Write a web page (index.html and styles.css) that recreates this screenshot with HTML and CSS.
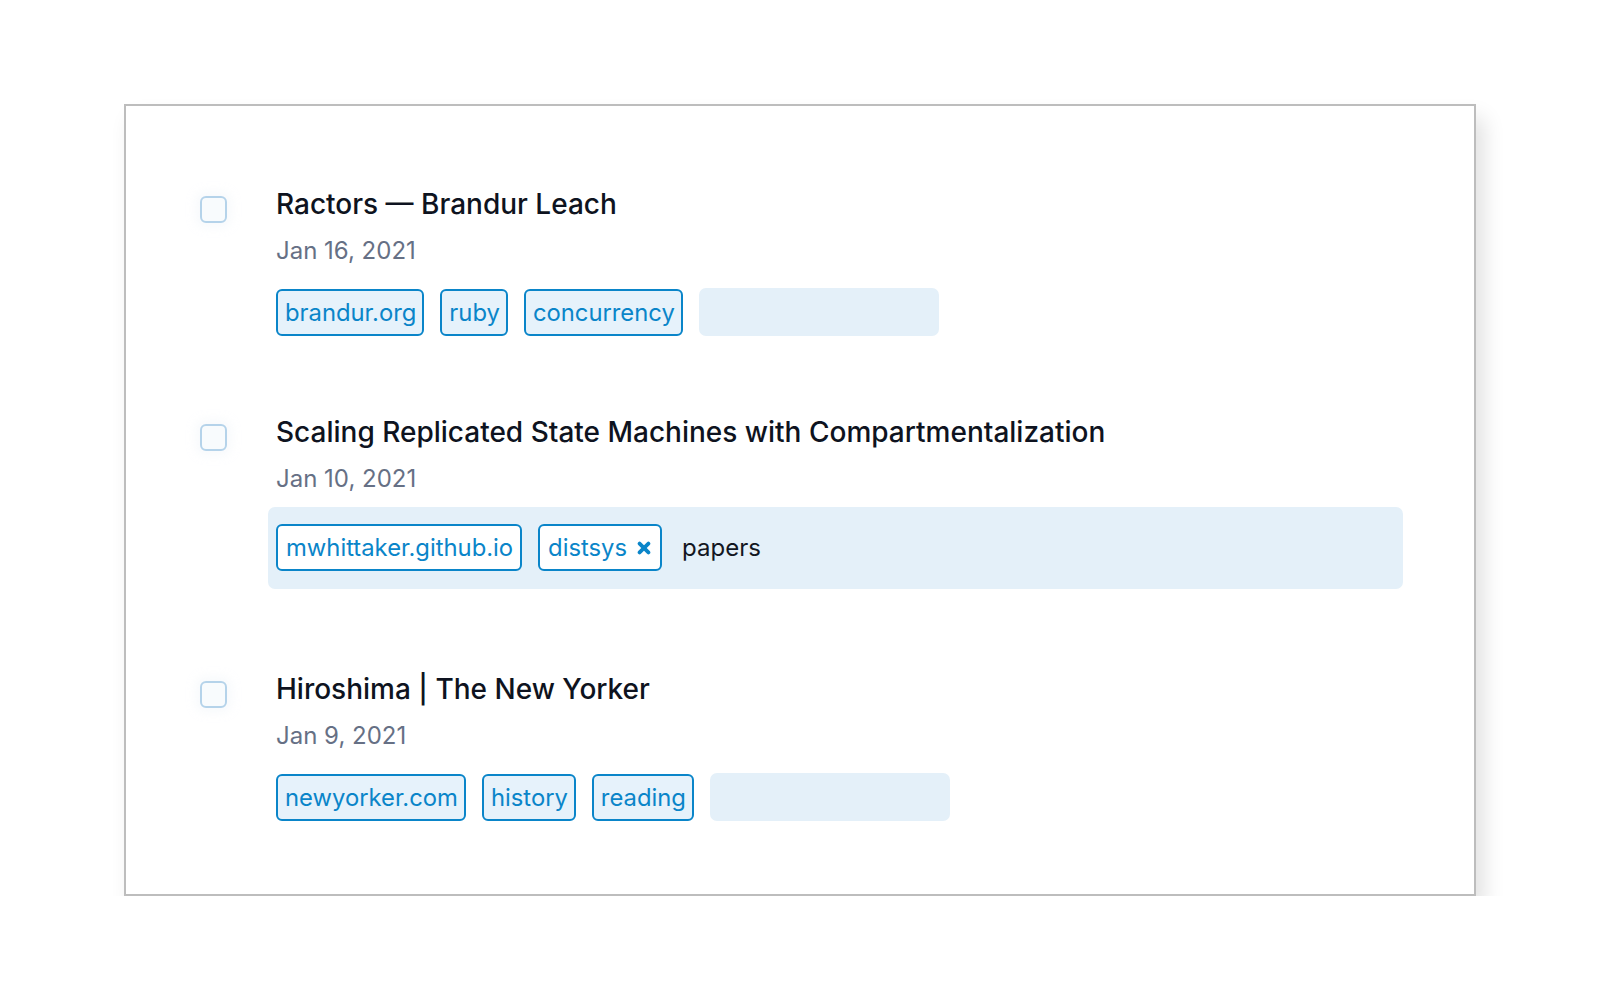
FILE: index.html
```html
<!DOCTYPE html>
<html lang="en">
<head>
<meta charset="utf-8">
<title>Bookmarks</title>
<link rel="stylesheet" href="styles.css">
</head>
<body>
<div class="card">
  <div class="item">
    <span class="check"></span>
    <div class="body">
      <div class="title">Ractors — Brandur Leach</div>
      <div class="date">Jan 16, 2021</div>
      <div class="tags">
        <span class="tag">brandur.org</span>
        <span class="tag">ruby</span>
        <span class="tag">concurrency</span>
        <span class="new-tag"></span>
      </div>
    </div>
  </div>
  <div class="item">
    <span class="check"></span>
    <div class="body">
      <div class="title">Scaling Replicated State Machines with Compartmentalization</div>
      <div class="date">Jan 10, 2021</div>
      <div class="tags focused">
        <span class="tag">mwhittaker.github.io</span>
        <span class="tag">distsys<svg class="x" viewBox="0 0 14 14" width="14" height="14"><path d="M2.6 2.6 L11.4 11.4 M11.4 2.6 L2.6 11.4" stroke="currentColor" stroke-width="3.8" stroke-linecap="round" fill="none"/></svg></span>
        <span class="new-tag">papers</span>
      </div>
    </div>
  </div>
  <div class="item">
    <span class="check"></span>
    <div class="body">
      <div class="title">Hiroshima | The New Yorker</div>
      <div class="date">Jan 9, 2021</div>
      <div class="tags">
        <span class="tag">newyorker.com</span>
        <span class="tag">history</span>
        <span class="tag">reading</span>
        <span class="new-tag"></span>
      </div>
    </div>
  </div>
</div>
</body>
</html>
```

FILE: styles.css
```css
html, body {
  margin: 0;
  background: #ffffff;
}
body {
  padding: 104px 124px 0 124px;
  font-family: Inter, "Noto Sans", sans-serif;
}
.card {
  border: 2px solid #bdbdbd;
  background: #ffffff;
  box-shadow: 8px 14px 20px rgba(0, 0, 0, 0.12);
  padding: 78px 71px 73px 74px;
  display: flex;
  flex-direction: column;
  gap: 76px;
}
.item {
  display: flex;
  align-items: flex-start;
  gap: 49px;
}
.check {
  flex: none;
  width: 23px;
  height: 23px;
  margin-top: 12px;
  border: 2px solid #b5d3ea;
  border-radius: 6px;
  background: #f8fbfd;
  box-shadow: 0 0 8px 5px rgba(235, 241, 246, 0.35);
}
.body {
  flex: 1;
  min-width: 0;
}
.title {
  font-size: 28px;
  line-height: 40px;
  color: #0e1320;
  font-weight: 500;
}
.date {
  margin-top: 11px;
  font-size: 24px;
  line-height: 32px;
  color: #667085;
}
.tags {
  margin-top: 21px;
  display: flex;
  align-items: center;
  gap: 16px;
}
.tag {
  display: inline-flex;
  align-items: center;
  height: 43px;
  padding: 0 6px 0 7px;
  border: 2px solid #0a85c9;
  border-radius: 6px;
  background: #e6f2fb;
  color: #0a85c9;
  font-size: 23.8px;
}
.tag .x {
  margin-left: 10px;
  margin-right: 2px;
}
.new-tag {
  width: 240px;
  height: 48px;
  border-radius: 7px;
  background: #e4f0f9;
}
.tags.focused {
  margin-top: 12px;
  margin-bottom: 4px;
  margin-left: -8px;
  padding: 17px 8px 18px;
  border-radius: 7px;
  background: #e4f0f9;
}
.tags.focused .tag {
  background: #ffffff;
  padding: 0 7px 0 8px;
}
.tags.focused .new-tag {
  flex: 1;
  width: auto;
  height: 47px;
  background: transparent;
  display: flex;
  align-items: center;
  padding-left: 4px;
  font-size: 24px;
  color: #131722;
}
```
